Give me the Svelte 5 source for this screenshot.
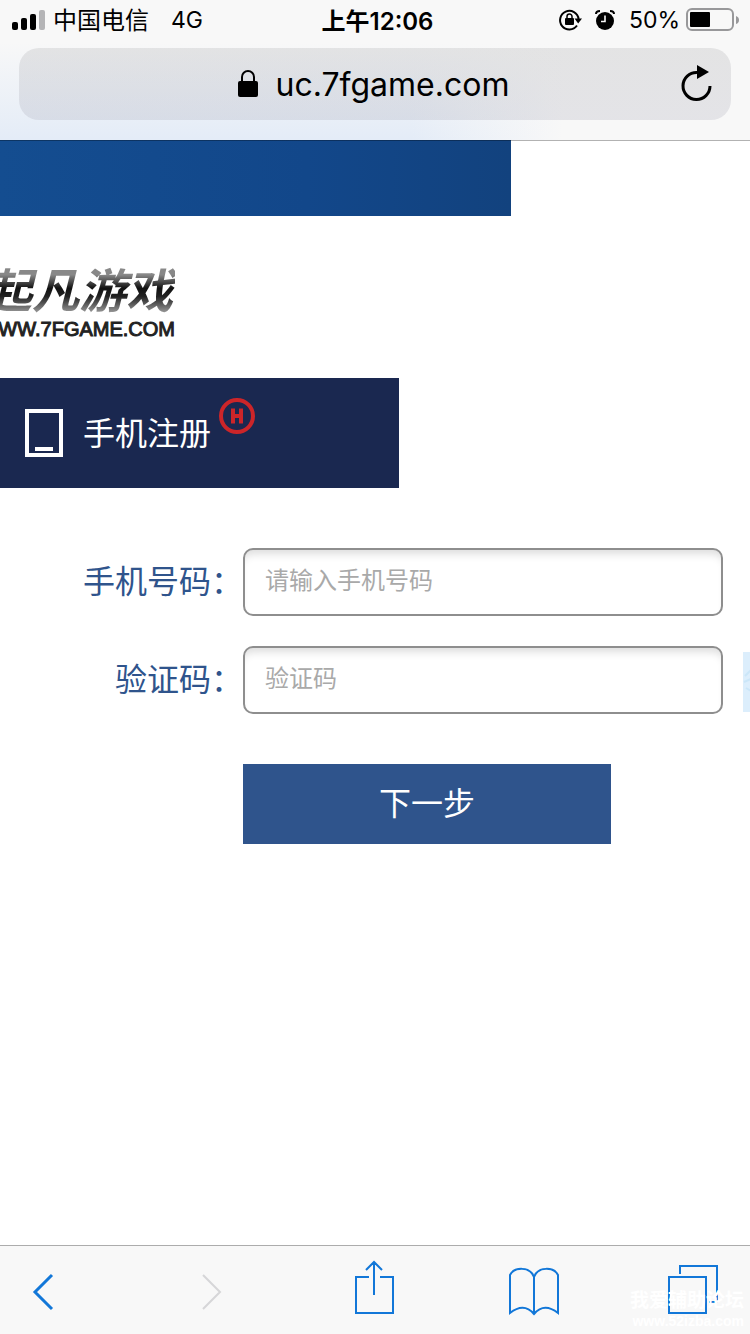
<script>
  let phone = $state('');
  let code = $state('');

  function nextStep(event) {
    event.preventDefault();
  }
</script>

<div class="screen">
  <header class="chrome">
    <div class="status">
      <div class="carrier">
        <svg width="34" height="22" viewBox="0 0 34 22" aria-hidden="true">
          <rect x="0" y="13" width="6" height="8" rx="2" />
          <rect x="9" y="9" width="6" height="12" rx="2" />
          <rect x="18" y="5" width="6" height="16" rx="2" />
          <rect x="27" y="1" width="6" height="20" rx="2" fill="#b4b4b6" />
        </svg>
        <span class="operator">中国电信</span>
        <span class="network">4G</span>
      </div>
      <div class="clock">上午12:06</div>
      <div class="indicators">
        <svg class="rotation" width="24" height="22" viewBox="0 0 24 22" aria-hidden="true">
          <path d="M18 16.500A9.300 9.300 0 1 1 19.600 10" fill="none" stroke="#000" stroke-width="2" />
          <path d="M15.500 9.500H23l-3.800 5z" />
          <rect x="6" y="9" width="9" height="7" rx="1" />
          <path d="M8 9.500V7.500a2.500 2.500 0 0 1 5 0v2" fill="none" stroke="#000" stroke-width="1.500" />
        </svg>
        <svg class="alarm" width="20" height="22" viewBox="0 0 20 22" aria-hidden="true">
          <circle cx="10" cy="12" r="9" />
          <path d="M1 5Q1 2 5 2M15 2Q19 2 19 5" fill="none" stroke="#000" stroke-width="2" />
          <path d="M10 6.500V12.500H6" fill="none" stroke="#f8f8f8" stroke-width="1.600" />
        </svg>
        <span>50%</span>
        <svg class="battery" width="53" height="24" viewBox="0 0 53 24" aria-hidden="true">
          <rect x="1" y="1" width="46" height="21" rx="5" fill="none" stroke="#98989a" stroke-width="2" />
          <rect x="4" y="4" width="20" height="15" rx="1" />
          <path d="M50 8v8q3-1 3-4t-3-4z" fill="#98989a" />
        </svg>
      </div>
    </div>
    <div class="address">
      <a class="host" href="#top">
        <svg width="20" height="28" viewBox="0 0 20 28" aria-hidden="true">
          <rect x="0" y="11" width="20" height="16" rx="2" />
          <path d="M4 12V7a6 6 0 0 1 12 0v5" fill="none" stroke="#000" stroke-width="2" />
        </svg>
        <span>uc.7fgame.com</span>
      </a>
      <button class="icon reload" type="button" aria-label="刷新">
        <svg width="32" height="38" viewBox="0 0 32 38" aria-hidden="true">
          <path d="M16 7.500A13.500 13.500 0 1 0 29 21" fill="none" stroke="#000" stroke-width="3" />
          <path d="M16 0l12 7-12 7z" />
        </svg>
      </button>
    </div>
  </header>

  <main>
    <div class="banner"></div>

    <div class="logo">
      <div class="logo-name">起凡游戏</div>
      <div class="logo-url">WWW.7FGAME.COM</div>
    </div>

    <div class="tab">
      <svg class="device" width="38" height="48" viewBox="0 0 38 48" aria-hidden="true">
        <rect x="2" y="2" width="34" height="44" fill="none" stroke="#fff" stroke-width="4" />
        <rect x="10" y="38" width="18" height="4" fill="#fff" />
      </svg>
      <span class="tab-name">手机注册</span>
      <svg class="hot" width="36" height="36" viewBox="0 0 36 36" aria-hidden="true">
        <circle cx="18" cy="18" r="16" fill="none" stroke="#cc2529" stroke-width="4" />
        <path d="M14 10.500v15M22 10.500v15M14 18h8" fill="none" stroke="#cc2529" stroke-width="4" />
      </svg>
    </div>

    <form onsubmit={nextStep}>
      <div class="row">
        <label for="phone">手机号码：</label>
        <input id="phone" type="tel" placeholder="请输入手机号码" bind:value={phone} />
      </div>
      <div class="row">
        <label for="code">验证码：</label>
        <input id="code" type="text" placeholder="验证码" bind:value={code} />
        <div class="captcha">
          <svg width="60" height="60" viewBox="0 0 60 60" aria-hidden="true">
            <path d="M2 24l6-6M1 30l7-3M3 36l5 3" fill="none" stroke="#cbe6f8" stroke-width="2" />
          </svg>
        </div>
      </div>
      <button class="next" type="submit">下一步</button>
    </form>
  </main>

  <nav class="toolbar">
    <button class="icon" type="button" aria-label="后退">
      <svg width="50" height="60" viewBox="0 0 50 60" aria-hidden="true">
        <path d="M33 17L16 34l17 17" stroke-width="3" />
      </svg>
    </button>
    <button class="icon" type="button" aria-label="前进" disabled>
      <svg width="50" height="60" viewBox="0 0 50 60" aria-hidden="true">
        <path d="M22 17l17 17-17 17" stroke-width="2" />
      </svg>
    </button>
    <button class="icon" type="button" aria-label="分享">
      <svg width="50" height="60" viewBox="-5 0 50 60" aria-hidden="true">
        <path d="M20 19H7v36h37V19H31M25 37V5M17 12l8-8 8 8" />
      </svg>
    </button>
    <button class="icon" type="button" aria-label="书签">
      <svg width="50" height="60" viewBox="-3 0 50 60" aria-hidden="true">
        <path d="M25 19C21 8 5 9 1 17v38q14-11 24 1q10-12 24-1V17C45 9 29 8 25 19v37" />
      </svg>
    </button>
    <button class="icon" type="button" aria-label="标签页">
      <svg width="50" height="60" viewBox="0 0 50 60" aria-hidden="true">
        <path d="M1 19h37v36H1zM12 16V8h37v36h-8" />
      </svg>
    </button>
    <div class="watermark">
      <div>我爱辅助论坛</div>
      <div class="watermark-url">www.52izba.com</div>
    </div>
  </nav>
</div>

<style>
  :global(body) {
    margin: 0;
    background: #fff;
  }

  .screen {
    display: flex;
    flex-direction: column;
    min-height: 100vh;
    overflow: hidden;
    color: #000;
    font-family: Inter, 'Noto Sans CJK SC', sans-serif;
  }

  svg {
    display: block;
    flex: none;
    overflow: visible;
  }

  .chrome {
    position: relative;
    z-index: 1;
    border-bottom: 1px solid rgba(0, 0, 0, 0.3);
    padding: 0 19px 20px;
    background:
      linear-gradient(to bottom, #f8f8f8 30%, rgba(248, 248, 248, 0) 100%),
      linear-gradient(to right, #e4ecf7 55%, #f8f8f8 75%);
    background-clip: padding-box;
  }

  .status {
    display: grid;
    grid-template-columns: 1fr auto 1fr;
    align-items: center;
    height: 40px;
    margin: 0 -8px 8px -7px;
    font-size: 24px;
  }

  .carrier,
  .indicators {
    display: flex;
    align-items: center;
  }

  .carrier {
    gap: 7px;
  }

  .operator {
    padding-bottom: 4px;
  }

  .network {
    margin-left: 15px;
    font-size: 23px;
  }

  .clock {
    padding: 0 0 2px 4px;
    font-weight: 600;
  }

  .indicators {
    justify-content: flex-end;
    font-size: 23px;
  }

  .alarm {
    margin: 0 14px 0 12px;
  }

  .battery {
    margin-left: 6px;
  }

  .address {
    display: grid;
    grid-template-columns: 1fr auto 1fr;
    align-items: center;
    height: 72px;
    border-radius: 20px;
    padding: 0 18px;
    background: linear-gradient(to bottom, rgba(160, 160, 162, 0.23), rgba(160, 160, 176, 0.23));
  }

  .host {
    display: flex;
    grid-column: 2;
    align-items: center;
    gap: 18px;
    padding-right: 3px;
    color: #000;
    font-size: 32px;
    text-decoration: none;
  }

  .icon {
    border: 0;
    padding: 0;
    background: none;
  }

  .reload {
    justify-self: end;
  }

  main {
    flex: 1;
  }

  .banner {
    width: 511px;
    max-width: 100%;
    height: 76px;
    margin-top: -1px;
    background: linear-gradient(to right, #144d90, #12478a 60%, #12427e);
  }

  .logo {
    display: flex;
    flex-direction: column;
    align-items: flex-end;
    width: 175px;
    margin: 48px 0 38px;
    overflow: hidden;
    white-space: nowrap;
  }

  .logo-name {
    padding-right: 2px;
    background: linear-gradient(to bottom, #888 20%, #111 45%, #222 60%, #999 90%);
    background-clip: text;
    color: transparent;
    font-size: 47px;
    font-style: italic;
    font-weight: 700;
    line-height: 54px;
  }

  .logo-url {
    color: #222;
    font-family: 'Liberation Sans', Arial, sans-serif;
    font-size: 20px;
    line-height: 22px;
    -webkit-text-stroke: 1px #222;
  }

  .tab {
    display: flex;
    align-items: center;
    box-sizing: border-box;
    width: 399px;
    max-width: 100%;
    height: 110px;
    padding-left: 25px;
    background: #1a2850;
    color: #fff;
    font-size: 32px;
  }

  .tab-name {
    padding-bottom: 4px;
  }

  .device {
    margin-right: 20px;
  }

  .hot {
    align-self: flex-start;
    margin: 20px 0 0 8px;
  }

  form {
    padding: 60px 0 40px;
  }

  .row {
    display: flex;
    align-items: center;
    margin-bottom: 30px;
  }

  label {
    flex: none;
    width: 243px;
    color: #2f548c;
    font-size: 32px;
    line-height: 44px;
    text-align: right;
  }

  .row input {
    flex: 1;
    box-sizing: border-box;
    min-width: 0;
    height: 68px;
    margin-right: 27px;
    border: 2px solid #8e8e8e;
    border-radius: 10px;
    padding: 0 20px 4px;
    background: #fff;
    box-shadow: inset 0 9px 9px -5px #ddd;
    color: #333;
    font-family: inherit;
    font-size: 24px;
  }

  .row input::placeholder {
    color: #a9a9a9;
  }

  .captcha {
    flex: none;
    width: 60px;
    height: 60px;
    margin: 4px -53px 0 -7px;
    background: #dceefc;
  }

  .next {
    display: block;
    width: 368px;
    height: 80px;
    margin: 50px 0 0 243px;
    border: 0;
    padding: 0 0 6px;
    background: #2f548c;
    color: #fff;
    font-family: inherit;
    font-size: 32px;
  }

  .toolbar {
    position: relative;
    display: flex;
    justify-content: space-between;
    border-top: 1px solid #acacac;
    padding: 12px 32px 16px 19px;
    background: #f8f8f8;
  }

  .toolbar svg {
    fill: none;
    stroke: #1277d8;
    stroke-width: 2;
  }

  .toolbar button:disabled svg {
    stroke: #d6d6d8;
  }

  .watermark {
    position: absolute;
    right: 6px;
    bottom: 5px;
    color: #fff;
    font-size: 19px;
    font-weight: 700;
    line-height: 24px;
    text-align: right;
    pointer-events: none;
  }

  .watermark-url {
    font-family: 'Liberation Sans', Arial, sans-serif;
    font-size: 14px;
    line-height: 16px;
  }
</style>
